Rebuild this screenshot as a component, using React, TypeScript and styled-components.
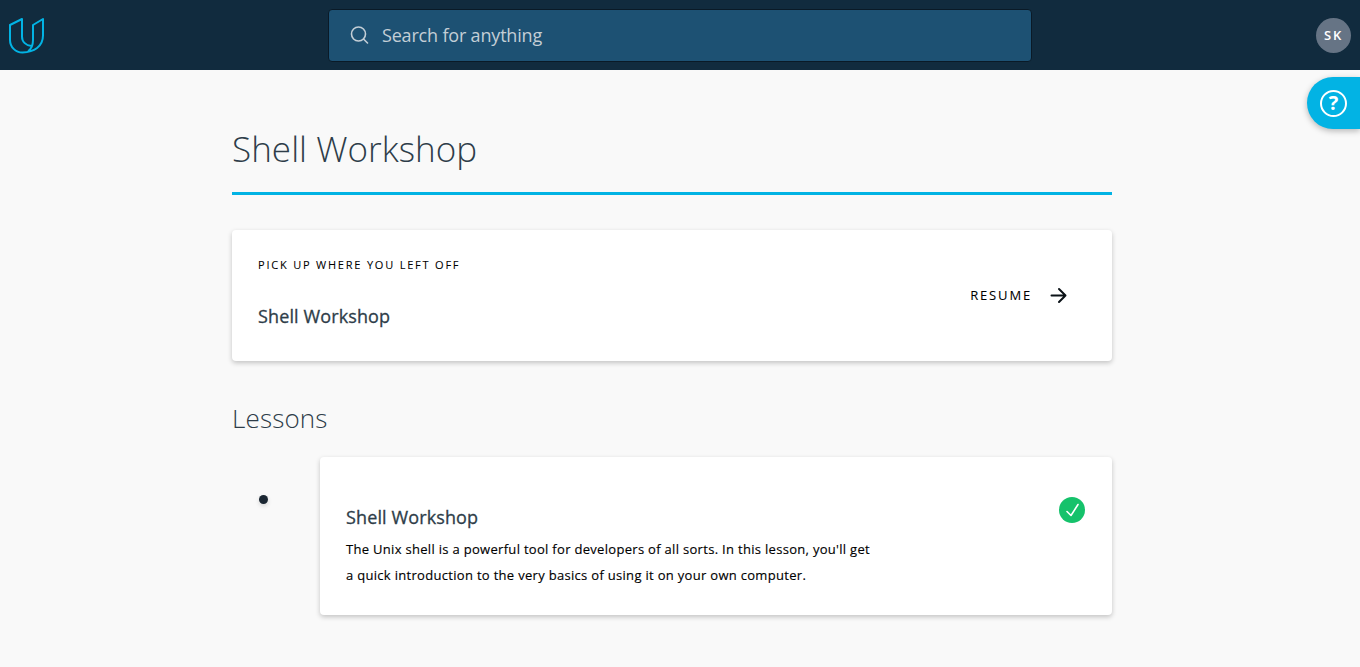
import React from "react";
import styled, { createGlobalStyle } from "styled-components";

const Global = createGlobalStyle`
  * { box-sizing: border-box; }
  body { margin: 0; background: #f9f9f9; font-family: "Open Sans", sans-serif; color: #0b0b0b; overflow: hidden; }
  h1, h2, h3, p { margin: 0; }
`;

const Page = styled.div`
  position: relative;
  min-height: 667px;
`;

const Header = styled.header`
  height: 70px;
  background: #112b3e;
  display: grid;
  grid-template-columns: 328px 704px 1fr;
  align-items: center;
  padding-right: 9px;
`;

const Logo = styled.svg`
  margin-left: 8px;
`;

const Search = styled.label`
  height: 53px;
  display: flex;
  align-items: center;
  gap: 12px;
  padding-left: 21px;
  background: #1d5173;
  border: 1px solid #0a1a27;
  border-radius: 4px;
  color: #c3ced6;
  font-size: 18px;
  letter-spacing: -0.18px;
`;

const Avatar = styled.div`
  width: 35px;
  height: 35px;
  justify-self: end;
  border-radius: 50%;
  background: #667485;
  color: #fff;
  font-size: 13px;
  font-weight: 600;
  letter-spacing: 1.8px;
  display: flex;
  align-items: center;
  justify-content: center;
`;

const Help = styled.button`
  position: absolute;
  top: 77px;
  right: 0;
  width: 53px;
  height: 52px;
  padding: 0 0 0 13px;
  border: 0;
  border-radius: 26px 0 0 26px;
  background: #02b3e4;
  box-shadow: 0 2px 6px rgba(0, 0, 0, 0.28);
  display: flex;
  align-items: center;
`;

const HelpMark = styled.span`
  width: 27px;
  height: 27px;
  border: 2px solid #fff;
  border-radius: 50%;
  color: #fff;
  font: 700 20px/22px "Open Sans", sans-serif;
  text-align: center;
`;

const Main = styled.main`
  width: 880px;
  margin-left: 232px;
  padding-top: 52px;
`;

const Title = styled.h1`
  height: 73px;
  border-bottom: 3px solid #02b3e4;
  color: #2e3d49;
  font-size: 35px;
  font-weight: 300;
  line-height: 54px;
  letter-spacing: 0.05px;
`;

const Card = styled.section`
  background: #fff;
  border-radius: 4px;
  box-shadow: 0 2px 5px rgba(0, 0, 0, 0.22);
  display: flex;
  justify-content: space-between;
`;

const ResumeCard = styled(Card)`
  height: 131px;
  margin-top: 35px;
  padding: 26px 44px 0 26px;
`;

const Eyebrow = styled.p`
  color: #000;
  font-size: 11px;
  line-height: 18px;
  letter-spacing: 1.79px;
  -webkit-text-stroke: 0.08px currentColor;
`;

const CardTitle = styled.h3`
  color: #2e3d49;
  font-size: 18px;
  font-weight: 400;
  line-height: 26px;
  letter-spacing: 0.12px;
  -webkit-text-stroke: 0.3px currentColor;
`;

const ResumeTitle = styled(CardTitle)`
  margin-top: 29px;
`;

const Resume = styled.div`
  height: 79px;
  display: flex;
  align-items: center;
  gap: 18px;
  color: #000;
  font-size: 13px;
  letter-spacing: 1.85px;
  -webkit-text-stroke: 0.08px currentColor;
`;

const ResumeLabel = styled.span`
  padding-bottom: 2px;
`;

const Section = styled.h2`
  margin-top: 38px;
  color: #2e3d49;
  font-size: 26px;
  font-weight: 300;
  line-height: 39px;
  letter-spacing: 0.15px;
`;

const LessonRow = styled.div`
  display: flex;
  margin-top: 19px;
`;

const Rail = styled.div`
  width: 88px;
  padding: 38px 0 0 27px;
`;

const Dot = styled.div`
  width: 9px;
  height: 9px;
  border-radius: 50%;
  background: #1b2733;
  box-shadow: 0 2px 4px rgba(0, 0, 0, 0.15);
`;

const LessonCard = styled(Card)`
  width: 792px;
  height: 158px;
  padding: 40px 27px 0 26px;
`;

const LessonText = styled.div`
  padding-top: 7px;
`;

const Summary = styled.p`
  width: 530px;
  margin-top: 6px;
  color: #000;
  font-size: 13px;
  line-height: 26px;
  letter-spacing: 0.305px;
  -webkit-text-stroke: 0.14px currentColor;
`;

export default function App() {
  return (
    <Page>
      <Global />
      <Header>
        <Logo width="37" height="37" viewBox="0 0 37 37" fill="none" stroke="#02b3e4" strokeWidth="2" strokeLinejoin="round">
          <path d="M23.500 29C18 28.500 14 25 14 19.500V2L2 8v15c0 7 5.500 12.500 12.500 12.500C26 35 35 29.500 35 18.500V2L25 8v15c0 5-1.500 9-5 11" />
        </Logo>
        <Search>
          <svg width="20" height="20" viewBox="0 0 20 20" fill="none" stroke="#c3ced6" strokeWidth="1.6" strokeLinecap="round">
            <circle cx="8.500" cy="9" r="7" />
            <path d="m13.500 14 4 4" />
          </svg>
          Search for anything
        </Search>
        <Avatar>SK</Avatar>
      </Header>
      <Help aria-label="Help"><HelpMark>?</HelpMark></Help>
      <Main>
        <Title>Shell Workshop</Title>
        <ResumeCard>
          <div>
            <Eyebrow>PICK UP WHERE YOU LEFT OFF</Eyebrow>
            <ResumeTitle>Shell Workshop</ResumeTitle>
          </div>
          <Resume>
            <ResumeLabel>RESUME</ResumeLabel>
            <svg width="18" height="18" viewBox="0 0 18 18" fill="none" stroke="#0b1217" strokeWidth="2" strokeLinecap="round" strokeLinejoin="round">
              <path d="M1.500 8.500h14M9 2l6.500 6.500L9 15" />
            </svg>
          </Resume>
        </ResumeCard>
        <Section>Lessons</Section>
        <LessonRow>
          <Rail><Dot /></Rail>
          <LessonCard>
            <LessonText>
              <CardTitle>Shell Workshop</CardTitle>
              <Summary>
                The Unix shell is a powerful tool for developers of all sorts. In this lesson, you'll get a quick introduction to the very basics of using it on your own computer.
              </Summary>
            </LessonText>
            <svg width="26" height="26" viewBox="0 0 26 26" fill="none">
              <circle cx="13" cy="13" r="13" fill="#15c26b" />
              <path d="m8 14.500 4 4L19 7.500" stroke="#fff" strokeWidth="1.600" strokeLinecap="round" strokeLinejoin="round" />
            </svg>
          </LessonCard>
        </LessonRow>
      </Main>
    </Page>
  );
}
